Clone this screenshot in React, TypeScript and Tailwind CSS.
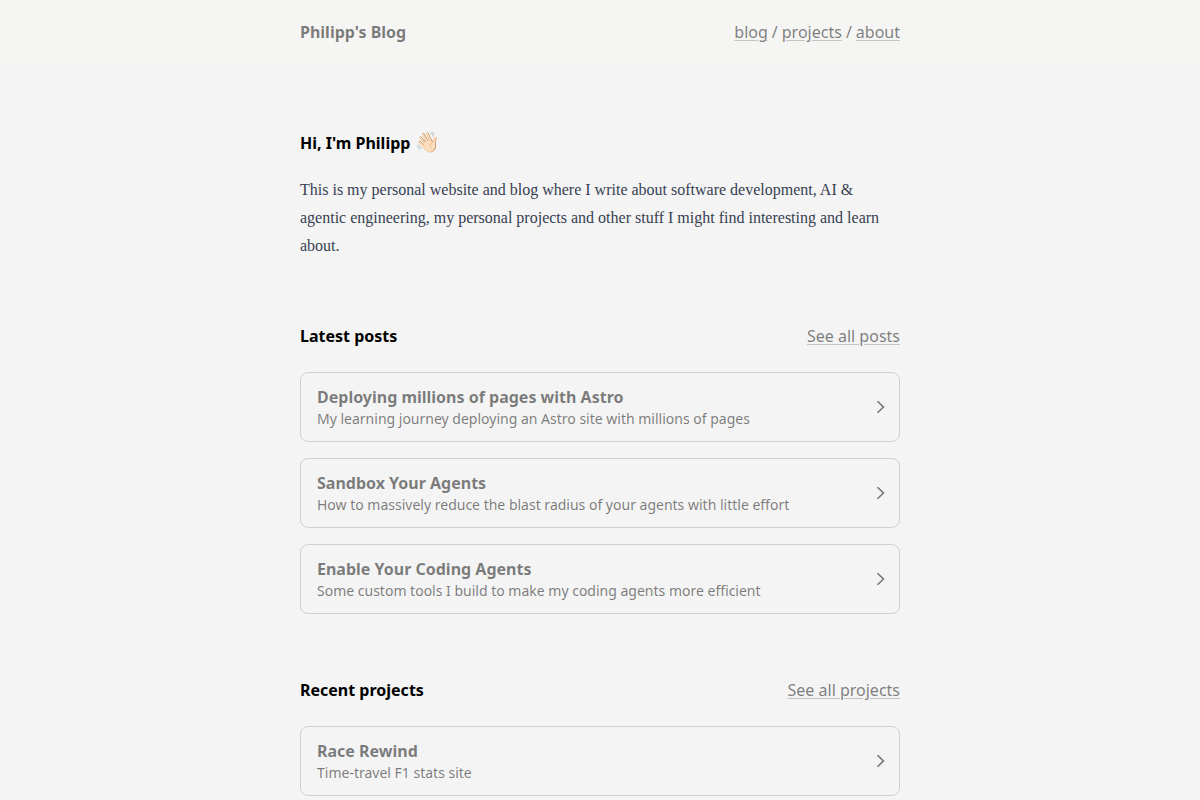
const posts = [
  { title: "Deploying millions of pages with Astro", text: "My learning journey deploying an Astro site with millions of pages" },
  { title: "Sandbox Your Agents", text: "How to massively reduce the blast radius of your agents with little effort" },
  { title: "Enable Your Coding Agents", text: "Some custom tools I build to make my coding agents more efficient" },
];
const projects = [{ title: "Race Rewind", text: "Time-travel F1 stats site" }];

const link = "underline decoration-black/20 underline-offset-2 hover:text-black";

function Card({ title, text }: { title: string; text: string }) {
  return (
    <li>
      <a href="#" className="flex items-center rounded-lg border border-black/15 py-3 pr-2 pl-4 hover:bg-black/5">
        <span className="flex flex-1 flex-col">
          <span className="leading-6 font-bold">{title}</span>
          <span className="text-sm">{text}</span>
        </span>
        <svg viewBox="0 0 24 24" className="size-5 fill-none stroke-current stroke-2" strokeLinecap="square" strokeLinejoin="miter" aria-hidden="true">
          <polyline points="8.5 5.8 14.9 12 8.5 18.2" />
        </svg>
      </a>
    </li>
  );
}

function Section({ title, more, items }: { title: string; more: string; items: { title: string; text: string }[] }) {
  return (
    <section className="space-y-6">
      <div className="flex flex-wrap items-center justify-between">
        <h2 className="font-bold text-black">{title}</h2>
        <a href="#" className={link}>{more}</a>
      </div>
      <ul className="flex flex-col gap-4">
        {items.map((item) => (
          <Card key={item.title} {...item} />
        ))}
      </ul>
    </section>
  );
}

export default function App() {
  return (
    <div className="min-h-screen bg-[#f4f4f4] font-['Noto_Sans',sans-serif] text-base text-black/50">
      <header className="bg-[#f5f5f3] py-5">
        <div className="mx-auto flex max-w-screen-sm items-center justify-between px-5">
          <a href="#" className="font-bold">Philipp's Blog</a>
          <nav className="flex gap-1">
            <a href="#" className={link}>blog</a>
            <span>/</span>
            <a href="#" className={link}>projects</a>
            <span>/</span>
            <a href="#" className={link}>about</a>
          </nav>
        </div>
      </header>
      <main className="mx-auto max-w-screen-sm space-y-16 px-5 pt-16">
        <section>
          <h1 className="font-bold text-black">
            Hi, I'm Philipp <span className="text-xl">👋🏻</span>
          </h1>
          <p className="mt-5 font-['Liberation_Serif',serif] leading-7 text-[#374151]">
            This is my personal website and blog where I write about software development, AI &amp; agentic engineering, my personal projects and other stuff I might find interesting and learn about.
          </p>
        </section>
        <Section title="Latest posts" more="See all posts" items={posts} />
        <Section title="Recent projects" more="See all projects" items={projects} />
      </main>
    </div>
  );
}
